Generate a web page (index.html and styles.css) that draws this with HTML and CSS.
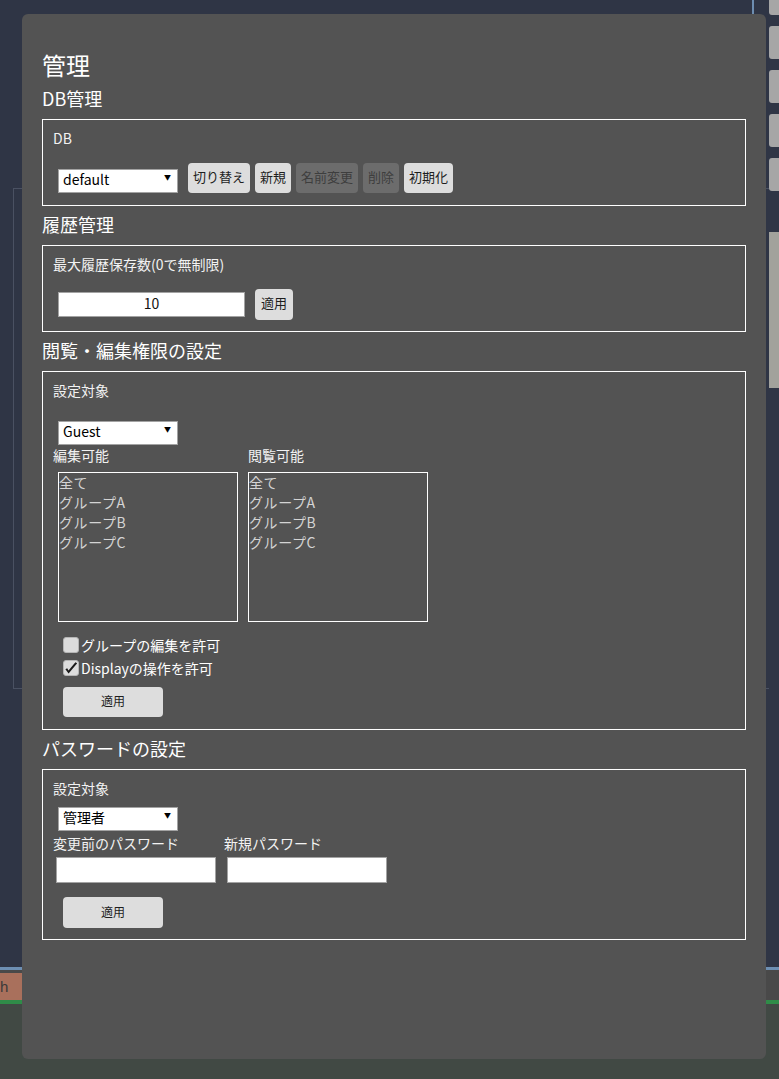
FILE: index.html
```html
<!DOCTYPE html>
<html lang="ja">
<head>
<meta charset="utf-8">
<title>管理</title>
<link rel="stylesheet" href="styles.css">
</head>
<body>
<div class="app">
  <div class="workspace">
    <div class="main">
      <div class="topline"><span class="topline-mark"></span></div>
      <div class="panel"></div>
    </div>
    <div class="side">
      <span class="side-btn first"></span>
      <span class="side-btn"></span>
      <span class="side-btn"></span>
      <span class="side-btn"></span>
      <span class="side-btn"></span>
      <span class="side-scroll"></span>
    </div>
  </div>
  <div class="status">
    <div class="status-line"></div>
    <div class="status-bar"><div class="status-tab"><span>h</span></div></div>
    <div class="status-green"></div>
    <div class="status-rest"></div>
  </div>

  <div class="modal">
    <h1 class="title">管理</h1>

    <h2 class="sec-title">DB管理</h2>
    <div class="box">
      <div class="label">DB</div>
      <div class="row">
        <div class="select-wrap"><select class="select"><option>default</option></select></div>
        <div class="btns">
          <button class="btn">切り替え</button>
          <button class="btn">新規</button>
          <button class="btn" disabled>名前変更</button>
          <button class="btn" disabled>削除</button>
          <button class="btn">初期化</button>
        </div>
      </div>
    </div>

    <h2 class="sec-title">履歴管理</h2>
    <div class="box">
      <div class="label">最大履歴保存数(0で無制限)</div>
      <div class="row">
        <input class="num-input" type="text" value="10">
        <button class="btn apply-small">適用</button>
      </div>
    </div>

    <h2 class="sec-title">閲覧・編集権限の設定</h2>
    <div class="box">
      <div class="label">設定対象</div>
      <div class="row">
        <div class="select-wrap"><select class="select"><option>Guest</option></select></div>
      </div>
      <div class="lists">
        <div class="list-col">
          <div class="label">編集可能</div>
          <div class="listbox first-list">
            <div class="opt">全て</div>
            <div class="opt">グループA</div>
            <div class="opt">グループB</div>
            <div class="opt">グループC</div>
          </div>
        </div>
        <div class="list-col">
          <div class="label">閲覧可能</div>
          <div class="listbox">
            <div class="opt">全て</div>
            <div class="opt">グループA</div>
            <div class="opt">グループB</div>
            <div class="opt">グループC</div>
          </div>
        </div>
      </div>
      <div class="checks">
        <label class="check"><span class="cb"></span>グループの編集を許可</label>
        <label class="check"><span class="cb checked"><svg viewBox="0 0 16 16" width="16" height="16"><path d="M2.4 9.2 L5.6 13.6 L14.2 3.2 L12.4 2.2 L5.5 10.6 L4.2 8.2 Z" fill="#1a1a1a"/></svg></span>Displayの操作を許可</label>
      </div>
      <button class="btn apply-wide">適用</button>
    </div>

    <h2 class="sec-title">パスワードの設定</h2>
    <div class="box pw-box">
      <div class="label">設定対象</div>
      <div class="select-wrap pw-select"><select class="select"><option>管理者</option></select></div>
      <div class="pw-fields">
        <div class="pw-col">
          <div class="label">変更前のパスワード</div>
          <input class="pw-input" type="password">
        </div>
        <div class="pw-col">
          <div class="label">新規パスワード</div>
          <input class="pw-input" type="password">
        </div>
      </div>
      <button class="btn apply-wide pw-apply">適用</button>
    </div>
  </div>
</div>
</body>
</html>
```
FILE: styles.css
```css
* { box-sizing: border-box; }

html, body {
  margin: 0;
  padding: 0;
}

body {
  background: #2f3545;
  font-family: "Noto Sans CJK JP", "Noto Sans", sans-serif;
  overflow: hidden;
}

.app {
  position: relative;
  width: 779px;
  height: 1079px;
  display: flex;
  flex-direction: column;
  overflow: hidden;
}

/* ---------- background application ---------- */
.workspace {
  height: 967px;
  display: flex;
}

.main {
  flex: 1;
  overflow: hidden;
}

.topline {
  height: 14px;
  padding-left: 752px;
}

.topline-mark {
  display: block;
  width: 2px;
  height: 14px;
  background: #6d8db0;
}

.panel {
  margin-top: 174px;
  margin-left: 13px;
  width: 760px;
  height: 501px;
  border: 1px solid #4a5162;
}

.side {
  width: 10px;
  display: flex;
  flex-direction: column;
  gap: 11px;
}

.side-btn {
  display: block;
  height: 33px;
  background: #a6a6a6;
  border-radius: 3px 0 0 3px;
}

.side-btn.first {
  margin-top: -18px;
}

.side-scroll {
  display: block;
  margin-top: 30px;
  height: 156px;
  background: #a2a29c;
}

.status {
  flex: 1;
  display: flex;
  flex-direction: column;
}

.status-line {
  height: 3px;
  background: #6d8fb3;
}

.status-bar {
  height: 30px;
  background: #494949;
  display: flex;
}

.status-tab {
  margin-top: 3px;
  width: 22px;
  background: #a9705c;
  display: flex;
  align-items: center;
  padding-left: 0;
  color: #3a3a3a;
  font-family: "Liberation Sans", sans-serif;
  font-size: 15px;
  white-space: nowrap;
}

.status-green {
  height: 4px;
  background: #2f8c48;
}

.status-rest {
  flex: 1;
  background: #414944;
}

/* ---------- modal ---------- */
.modal {
  position: absolute;
  left: 22px;
  top: 14px;
  width: 744px;
  height: 1045px;
  background: #535353;
  border-radius: 6px;
  padding: 35px 20px 0;
  color: #ffffff;
}

.title {
  margin: 0;
  font-size: 24px;
  line-height: 32px;
  font-weight: normal;
}

.sec-title {
  margin: 6px 0 9px;
  font-size: 18px;
  line-height: 24px;
  font-weight: normal;
}

.title + .sec-title {
  margin-top: 5px;
}

.box {
  border: 1px solid #ffffff;
  padding: 8px 10px 12px;
}

.label {
  font-size: 14px;
  line-height: 20px;
  color: #f2f2f2;
  white-space: nowrap;
}

.box > .label:first-child {
  margin-bottom: 15px;
}

.row {
  height: 30px;
  display: flex;
  align-items: center;
}

.select-wrap {
  position: relative;
  width: 120px;
  height: 24px;
  margin-left: 5px;
  flex: none;
}

.select-wrap::after {
  content: "▼";
  position: absolute;
  right: 7px;
  top: 0;
  line-height: 22px;
  font-size: 7px;
  color: #000;
  pointer-events: none;
}

.select {
  -webkit-appearance: none;
  appearance: none;
  width: 100%;
  height: 24px;
  margin: 0;
  padding: 0 4px 3px;
  border: 1px solid #a3a3a3;
  border-radius: 0;
  background: #ffffff;
  color: #000;
  font-family: "Noto Sans CJK JP", "Noto Sans", sans-serif;
  font-size: 14px;
  line-height: 19px;
}

.btns {
  display: flex;
  gap: 5px;
  margin-left: 10px;
}

.btn {
  height: 30px;
  border: none;
  border-radius: 4px;
  background: #dddddd;
  color: #1e1e1e;
  font-family: "Noto Sans CJK JP", "Noto Sans", sans-serif;
  font-size: 13px;
  line-height: 28px;
  padding: 0 5px 2px;
  margin: 0;
}

.btn:disabled {
  background: #6c6c6c;
  color: #3e3e3e;
}

.num-input {
  width: 187px;
  height: 25px;
  margin: 0 0 0 5px;
  border: 1px solid #a3a3a3;
  background: #fff;
  text-align: center;
  font-family: "Noto Sans CJK JP", "Noto Sans", sans-serif;
  font-size: 14px;
  color: #111;
  padding: 0 0 2px;
}

.apply-small {
  margin-left: 10px;
  height: 31px;
  width: 38px;
  padding: 0 0 2px;
}

.lists {
  display: flex;
  gap: 10px;
}

.list-col {
  display: flex;
  flex-direction: column;
}

.list-col:first-child {
  width: 185px;
}

.listbox {
  margin-top: 7px;
  width: 180px;
  height: 150px;
  border: 1px solid #ffffff;
  font-size: 14px;
  line-height: 20px;
  color: #d4d4d4;
  letter-spacing: 0.6px;
}

.opt {
  margin-top: -1px;
  margin-bottom: 1px;
}

.first-list {
  margin-left: 5px;
}

.checks {
  margin-top: 11px;
  display: flex;
  flex-direction: column;
}

.check {
  height: 23px;
  display: flex;
  align-items: center;
  padding-left: 10px;
  font-size: 14px;
  color: #ffffff;
  white-space: nowrap;
}

.cb {
  width: 16px;
  height: 16px;
  margin-right: 2px;
  background: #dcdcdc;
  border: 1px solid #b5b5b5;
  border-radius: 3px;
  display: flex;
  align-items: center;
  justify-content: center;
  flex: none;
  overflow: hidden;
}

.cb svg {
  display: block;
  flex: none;
}

.apply-wide {
  display: block;
  margin: 8px 0 0 10px;
  width: 100px;
  height: 30px;
  padding: 0 0 2px;
  font-size: 12px;
}

.pw-box {
  padding-bottom: 11px;
}

.pw-box > .label:first-child {
  margin-bottom: 6px;
}

.pw-select {
  display: block;
}

.pw-fields {
  margin-top: 5px;
  display: flex;
}

.pw-col {
  display: flex;
  flex-direction: column;
  width: 171px;
}

.pw-input {
  margin: 4px 0 0 3px;
  width: 160px;
  height: 26px;
  border: 1px solid #a3a3a3;
  background: #fff;
  padding: 0;
}

.pw-apply {
  margin-top: 14px;
  height: 31px;
}
```
